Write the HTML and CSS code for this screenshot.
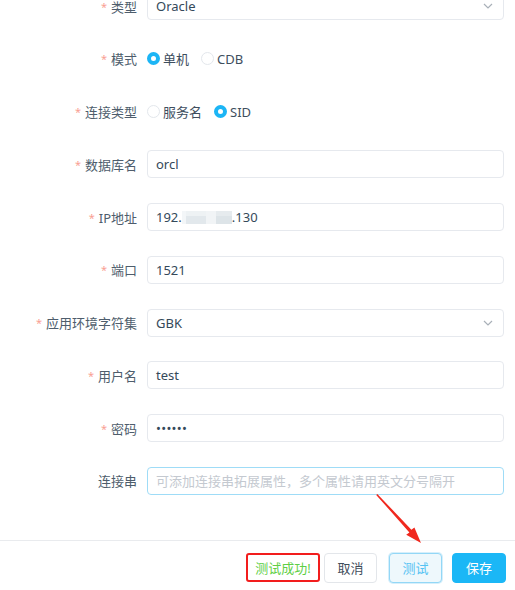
FILE: index.html
```html
<!DOCTYPE html>
<html lang="zh">
<head>
<meta charset="utf-8">
<link rel="stylesheet" href="styles.css">
</head>
<body>
<div class="dialog">
  <form class="form">
    <div class="row">
      <label class="label"><span class="star">*</span>类型</label>
      <div class="control select">Oracle<svg class="chev" viewBox="0 0 10 6" width="10" height="6"><path d="M1 1 L5 5 L9 1" fill="none" stroke="#a9b0b8" stroke-width="1.2"/></svg></div>
    </div>
    <div class="row">
      <label class="label"><span class="star">*</span>模式</label>
      <div class="radios">
        <span class="radio on"></span><span class="rtext">单机</span>
        <span class="radio"></span><span class="rtext">CDB</span>
      </div>
    </div>
    <div class="row">
      <label class="label"><span class="star">*</span>连接类型</label>
      <div class="radios">
        <span class="radio"></span><span class="rtext">服务名</span>
        <span class="radio on"></span><span class="rtext">SID</span>
      </div>
    </div>
    <div class="row">
      <label class="label"><span class="star">*</span>数据库名</label>
      <div class="control">orcl</div>
    </div>
    <div class="row">
      <label class="label"><span class="star">*</span>IP地址</label>
      <div class="control">192.<span class="blur"><i class="b1"></i><i class="b2"></i><i class="b3"></i><i class="b4"></i></span>.130</div>
    </div>
    <div class="row">
      <label class="label"><span class="star">*</span>端口</label>
      <div class="control">1521</div>
    </div>
    <div class="row">
      <label class="label"><span class="star">*</span>应用环境字符集</label>
      <div class="control select">GBK<svg class="chev" viewBox="0 0 10 6" width="10" height="6"><path d="M1 1 L5 5 L9 1" fill="none" stroke="#a9b0b8" stroke-width="1.2"/></svg></div>
    </div>
    <div class="row">
      <label class="label"><span class="star">*</span>用户名</label>
      <div class="control">test</div>
    </div>
    <div class="row">
      <label class="label"><span class="star">*</span>密码</label>
      <div class="control pwd">••••••</div>
    </div>
    <div class="row last">
      <label class="label">连接串</label>
      <div class="control focus placeholder">可添加连接串拓展属性，多个属性请用英文分号隔开</div>
    </div>
  </form>
  <div class="footer">
    <span class="success">测试成功!</span>
    <button class="btn" type="button">取消</button>
    <button class="btn test" type="button">测试</button>
    <button class="btn primary" type="button">保存</button>
  </div>
  <svg class="arrow" width="515" height="590" viewBox="0 0 515 590">
    <polygon points="376.2,502.9 377.3,501.9 411.4,537.7 414.4,535.4 421,551 406.2,542.8 409.4,540.4" fill="#f0281e"/>
  </svg>
</div>
</body>
</html>
```
FILE: styles.css
```css
* { box-sizing: border-box; }
html, body {
  margin: 0;
  padding: 0;
  background: #fff;
  width: 515px;
  height: 590px;
  overflow: hidden;
}
body {
  font-family: "Noto Sans", "Noto Sans CJK SC", sans-serif;
  font-size: 13px;
  color: #48576a;
}
.dialog {
  position: relative;
  width: 515px;
  height: 590px;
}
.form {
  margin: -8px 0 0 0;
  padding-right: 11px;
}
.row {
  display: grid;
  grid-template-columns: 137px 1fr;
  column-gap: 10px;
  align-items: center;
  height: 28px;
  margin-bottom: 24.75px;
}
.row.last { margin-bottom: 0; }
.label {
  text-align: right;
  color: #4e5d6c;
  font-size: 13px;
  white-space: nowrap;
}
.star {
  color: #f9a093;
  font-size: 11px;
  margin-right: 4px;
  vertical-align: 1px;
}
.control {
  height: 28px;
  border: 1px solid #e6e9ee;
  border-radius: 4px;
  padding: 0 8px;
  display: flex;
  align-items: center;
  color: #34495a;
  font-size: 13px;
  white-space: nowrap;
  overflow: hidden;
}
.select { justify-content: space-between; padding-right: 10px; }
.chev { display: block; }
.focus { border-color: #9fdcf7; }
.placeholder { color: #c4c9d0; }
.pwd { font-size: 13px; letter-spacing: 0.3px; color: #34495a; }
.blur {
  display: inline-flex;
  height: 13px;
  width: 50px;
  align-items: stretch;
}
.blur i { display: block; height: 100%; }
.blur .b1 { width: 4px; background: #f3f6f8; }
.blur .b2 { width: 20px; background: linear-gradient(#eef2f4 0 40%, #e2e8ec 40% 100%); }
.blur .b3 { width: 10px; background: #f1f4f6; }
.blur .b4 { width: 16px; background: linear-gradient(#e6ebee 0 40%, #dde4e8 40% 100%); }
.radios {
  display: flex;
  align-items: center;
  height: 28px;
}
.radio {
  width: 13px;
  height: 13px;
  border-radius: 50%;
  border: 1px solid #e3e7ec;
  background: #fff;
  flex: none;
}
.radio.on {
  border: 4px solid #1cb5f5;
  background: #fff;
}
.rtext {
  margin-left: 3px;
  margin-right: 12px;
  color: #3e4e5e;
}
.footer {
  margin-top: 45px;
  border-top: 1px solid #e9ebee;
  padding: 12px 9px 0 0;
  display: flex;
  justify-content: flex-end;
  align-items: center;
}
.success {
  width: 74px;
  height: 29px;
  border: 2px solid #f21d1d;
  border-radius: 3px;
  color: #5fcf46;
  display: flex;
  align-items: center;
  justify-content: center;
  font-size: 13px;
  margin-right: 4px;
}
.btn {
  font-family: inherit;
  font-size: 13px;
  height: 30px;
  width: 53px;
  border-radius: 4px;
  border: 1px solid #e3e6ea;
  background: #fff;
  color: #3f4d5b;
  padding: 0;
  margin-left: 10px;
}
.success + .btn { margin-left: 0; }
.btn.test {
  background: #eef8fc;
  border-color: #93d7f6;
  color: #55c3f3;
  box-shadow: 0 0 0 1px #d6effb;
  margin-left: 12px;
}
.btn.primary {
  background: #1bb7f6;
  border-color: #1bb7f6;
  color: #fff;
  width: 54px;
}
.arrow {
  position: absolute;
  left: 0;
  top: 0;
  pointer-events: none;
}
```
